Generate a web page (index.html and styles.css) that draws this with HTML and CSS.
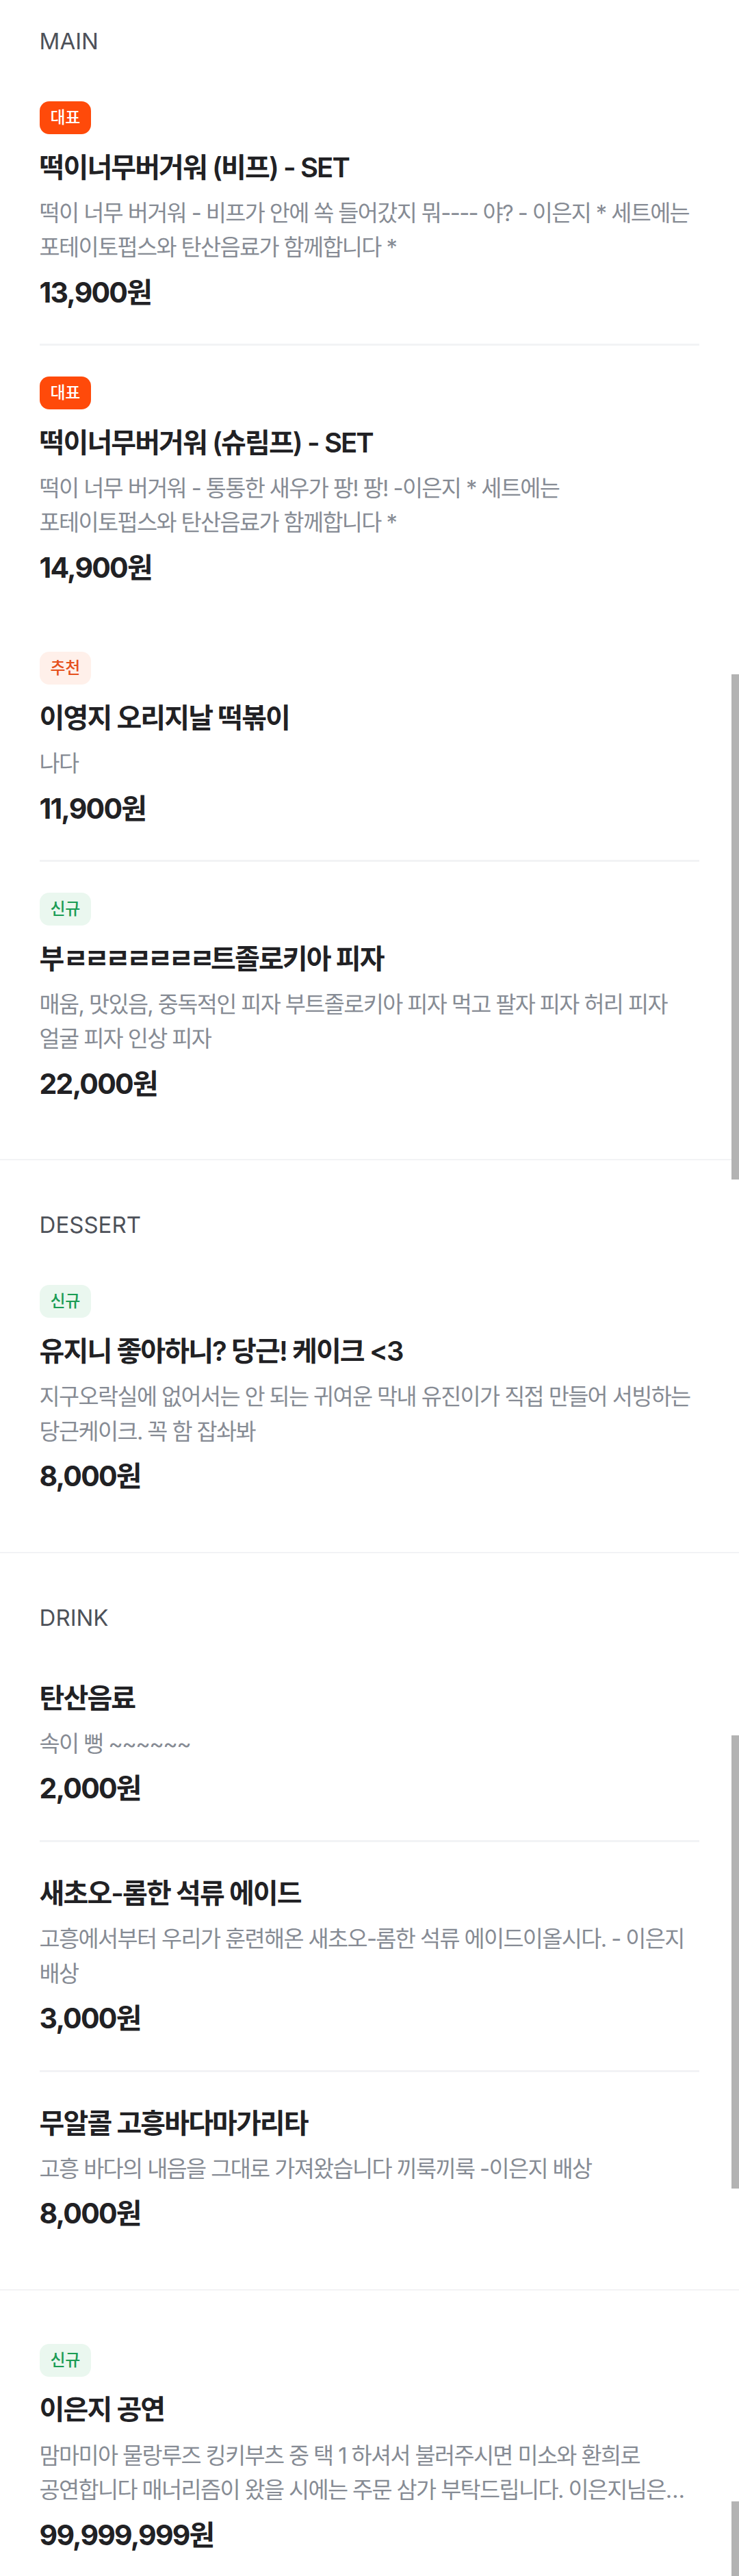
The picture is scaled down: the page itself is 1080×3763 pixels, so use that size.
FILE: index.html
```html
<!DOCTYPE html>
<html lang="ko">
<head>
<meta charset="utf-8">
<title>메뉴</title>
<link rel="stylesheet" href="styles.css">
</head>
<body>
<main class="menu">
  <section class="section section--first">
    <h2 class="section-title">MAIN</h2>
    <ul class="item-list">
      <li class="item">
        <span class="badge badge--main">대표</span>
        <h3 class="item-title">떡이너무버거워 (비프) - SET</h3>
        <p class="item-desc">떡이 너무 버거워 - 비프가 안에 쏙 들어갔지 뭐---- 야? - 이은지 * 세트에는 포테이토펍스와 탄산음료가 함께합니다 *</p>
        <p class="item-price">13,900원</p>
      </li>
      <li class="item item--plain">
        <span class="badge badge--main">대표</span>
        <h3 class="item-title">떡이너무버거워 (슈림프) - SET</h3>
        <p class="item-desc">떡이 너무 버거워 - 통통한 새우가 팡! 팡! -이은지 * 세트에는 포테이토펍스와 탄산음료가 함께합니다 *</p>
        <p class="item-price">14,900원</p>
      </li>
      <li class="item">
        <span class="badge badge--pick">추천</span>
        <h3 class="item-title">이영지 오리지날 떡볶이</h3>
        <p class="item-desc">나다</p>
        <p class="item-price">11,900원</p>
      </li>
      <li class="item">
        <span class="badge badge--new">신규</span>
        <h3 class="item-title">부<span class="jamo">ㄹㄹㄹㄹㄹㄹㄹ</span>트졸로키아 피자</h3>
        <p class="item-desc">매움, 맛있음, 중독적인 피자 부트졸로키아 피자 먹고 팔자 피자 허리 피자 얼굴 피자 인상 피자</p>
        <p class="item-price">22,000원</p>
      </li>
    </ul>
  </section>

  <section class="section">
    <h2 class="section-title">DESSERT</h2>
    <ul class="item-list">
      <li class="item">
        <span class="badge badge--new">신규</span>
        <h3 class="item-title">유지니 좋아하니? 당근! 케이크 &lt;3</h3>
        <p class="item-desc">지구오락실에 없어서는 안 되는 귀여운 막내 유진이가 직접 만들어 서빙하는 당근케이크. 꼭 함 잡솨봐</p>
        <p class="item-price">8,000원</p>
      </li>
    </ul>
  </section>

  <section class="section">
    <h2 class="section-title">DRINK</h2>
    <ul class="item-list">
      <li class="item">
        <h3 class="item-title">탄산음료</h3>
        <p class="item-desc">속이 뻥 ~~~~~~</p>
        <p class="item-price">2,000원</p>
      </li>
      <li class="item">
        <h3 class="item-title">새초오-롬한 석류 에이드</h3>
        <p class="item-desc">고흥에서부터 우리가 훈련해온 새초오-롬한 석류 에이드이올시다. - 이은지 배상</p>
        <p class="item-price">3,000원</p>
      </li>
      <li class="item">
        <h3 class="item-title">무알콜 고흥바다마가리타</h3>
        <p class="item-desc">고흥 바다의 내음을 그대로 가져왔습니다 끼룩끼룩 -이은지 배상</p>
        <p class="item-price">8,000원</p>
      </li>
    </ul>
  </section>

  <section class="section section--untitled">
    <ul class="item-list">
      <li class="item">
        <span class="badge badge--new">신규</span>
        <h3 class="item-title">이은지 공연</h3>
        <p class="item-desc">맘마미아 물랑루즈 킹키부츠 중 택 1 하셔서 불러주시면 미소와 환희로 공연합니다 매너리즘이 왔을 시에는 주문 삼가 부탁드립니다. 이은지님은…</p>
        <p class="item-price">99,999,999원</p>
      </li>
    </ul>
  </section>

  <div class="scroll-thumb scroll-thumb--one"></div>
  <div class="scroll-thumb scroll-thumb--two"></div>
  <div class="scroll-thumb scroll-thumb--three"></div>
</main>
</body>
</html>
```

FILE: styles.css
```css
* {
  box-sizing: border-box;
}

html,
body {
  margin: 0;
  padding: 0;
  background: #ffffff;
}

body {
  font-family: Inter, "Noto Sans CJK KR", sans-serif;
  color: #212124;
}

.menu {
  position: relative;
  width: 1080px;
}

.section {
  padding-bottom: 35px;
  border-bottom: 2px solid #f2f3f5;
}

.section-title {
  margin: 0 0 18px;
  padding: 69px 57.6px 0;
  font-size: 33px;
  font-weight: 400;
  line-height: 50px;
  color: #4d5159;
}

.section--first .section-title {
  padding-top: 35px;
}

.section--untitled {
  padding-top: 33px;
}

.item-list {
  list-style: none;
  margin: 0;
  padding: 0 57.6px;
}

.item {
  display: flex;
  flex-direction: column;
  align-items: flex-start;
  padding: 45px 0 46px;
  border-bottom: 3px solid #f2f3f5;
}

.item:last-child {
  border-bottom: none;
}

.item--plain {
  border-bottom-color: transparent;
}

.badge {
  display: inline-flex;
  align-items: center;
  justify-content: center;
  height: 48px;
  padding: 0 16px;
  margin-bottom: 18.5px;
  border-radius: 14px;
  font-size: 24px;
  font-weight: 500;
  letter-spacing: -0.5px;
  line-height: 1;
}

.badge--main {
  background: #ff4a0a;
  color: #ffffff;
}

.badge--pick {
  background: #fff0ea;
  color: #e5501c;
}

.badge--new {
  background: #eaf7ef;
  color: #1b9c55;
}

.item-title {
  margin: 0 0 12.3px;
  font-size: 40px;
  font-weight: 600;
  line-height: 59px;
  letter-spacing: -1.9px;
  color: #212124;
}

.jamo {
  letter-spacing: -6px;
}

.item-desc {
  align-self: stretch;
  margin: 0 0 12px;
  padding-right: 4px;
  font-size: 32.7px;
  font-weight: 400;
  line-height: 50.4px;
  letter-spacing: -1.6px;
  color: #868b94;
  word-break: keep-all;
}

.item-price {
  margin: 0;
  font-size: 41px;
  font-weight: 700;
  line-height: 57.6px;
  letter-spacing: -1.8px;
  color: #212124;
}

.scroll-thumb {
  position: absolute;
  right: 0;
  width: 11px;
  background: #b3b3b3;
}

.scroll-thumb--one {
  top: 985px;
  height: 738px;
}

.scroll-thumb--two {
  top: 2535px;
  height: 662px;
}

.scroll-thumb--three {
  top: 3654px;
  height: 200px;
}
```
